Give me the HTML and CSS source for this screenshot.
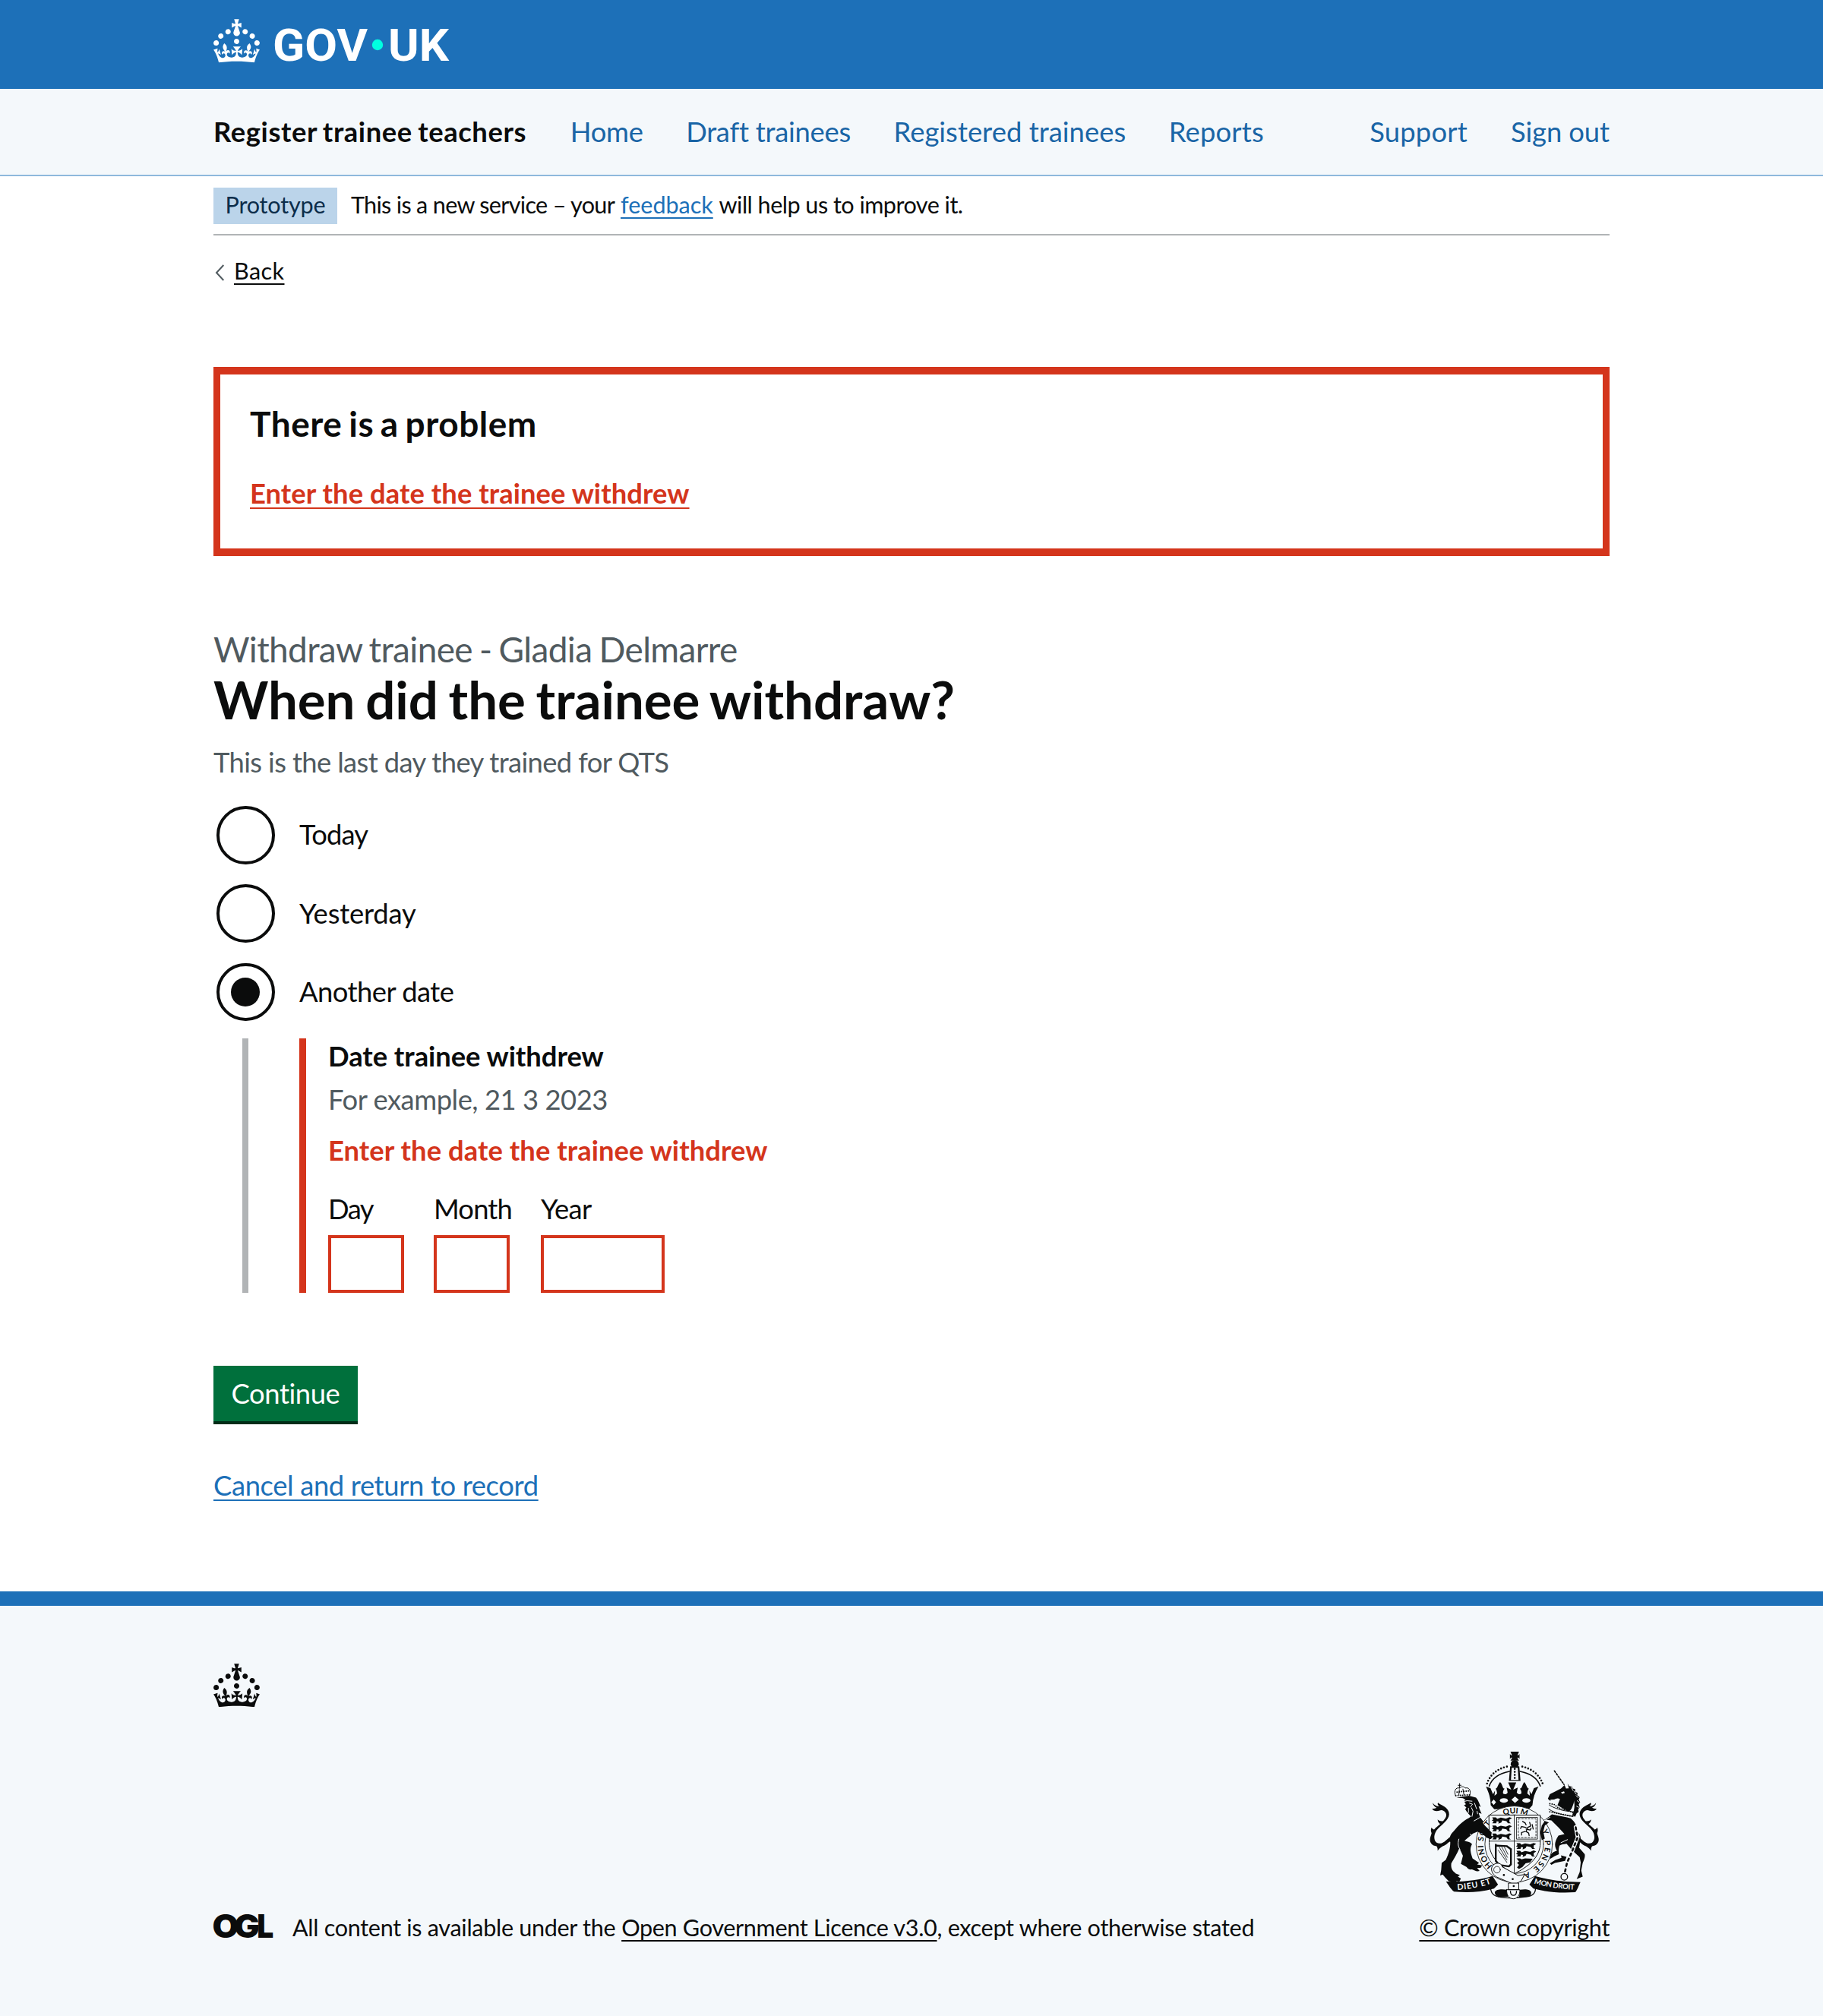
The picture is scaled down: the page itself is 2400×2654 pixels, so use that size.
FILE: index.html
```html
<!DOCTYPE html>
<html lang="en">
<head>
<meta charset="utf-8">
<title>When did the trainee withdraw? - Register trainee teachers - GOV.UK</title>
<link rel="stylesheet" href="styles.css">
</head>
<body>
<svg class="defs" aria-hidden="true">
  <symbol id="crown" viewBox="0 0 32 30">
    <path d="M22.6 10.4c-1 .4-2-.1-2.4-1-.4-.9.1-2 1-2.4.9-.4 2 .1 2.4 1s-.1 2-1 2.4m-5.9 6.7c-.9.4-2-.1-2.4-1-.4-.9.1-2 1-2.4.9-.4 2 .1 2.4 1s-.1 2-1 2.4m10.8-3.7c-1 .4-2-.1-2.4-1-.4-.9.1-2 1-2.4.9-.4 2 .1 2.4 1s0 2-1 2.4m3.3 4.8c-1 .4-2-.1-2.4-1-.4-.9.1-2 1-2.4.9-.4 2 .1 2.4 1s-.1 2-1 2.4M17 4.7l2.3 1.2V2.5l-2.3.7-.2-.2.9-3h-3.4l.9 3-.2.2c-.1.1-2.3-.7-2.3-.7v3.4L15 4.7c.1.1.1.2.2.2l-1.3 4c-.1.2-.1.4-.1.6 0 1.1.8 2 1.9 2.2h.7c1-.2 1.9-1.1 1.9-2.1 0-.2 0-.4-.1-.6l-1.3-4c-.1-.2 0-.2.1-.3m-7.6 5.7c.9.4 2-.1 2.4-1 .4-.9-.1-2-1-2.4-.9-.4-2 .1-2.4 1s0 2 1 2.4m-5 3c.9.4 2-.1 2.4-1 .4-.9-.1-2-1-2.4-.9-.4-2 .1-2.4 1s.1 2 1 2.4m-3.2 4.8c.9.4 2-.1 2.4-1 .4-.9-.1-2-1-2.4-.9-.4-2 .1-2.4 1s0 2 1 2.4m14.8 11c4.4 0 8.6.3 12.3.8 1.1-4.5 2.4-7 3.7-8.8l-2.5-.9c.2 1.3.3 1.9 0 2.7-.4-.4-.8-1.1-1.1-2.3l-1.2 4c.7-.5 1.3-.8 2-.9-1.1 2.5-2.6 3.1-3.5 3-1.1-.2-1.7-1.2-1.5-2.1.3-1.2 1.5-1.5 2.1-.1 1.1-2.3-.8-3-2-2.3 1.9-1.9 2.1-3.5.6-5.6-2.1 1.6-2.1 3.2-1.2 5.5-1.2-1.4-3.2-.6-2.5 1.6.9-1.4 2.1-.5 1.9.8-.2 1.1-1.7 2.1-3.5 1.9-2.7-.2-2.9-2.1-2.9-3.6.7-.1 1.9.5 2.9 1.9l.4-4.3c-1.1 1.1-2.1 1.4-3.2 1.4.4-1.2 2.1-3 2.1-3h-5.4s1.7 1.9 2.1 3c-1.1 0-2.1-.2-3.2-1.4l.4 4.3c1-1.4 2.2-2 2.9-1.9-.1 1.5-.2 3.4-2.9 3.6-1.9.2-3.4-.8-3.5-1.9-.2-1.3 1-2.2 1.9-.8.7-2.3-1.2-3-2.5-1.6.9-2.2.9-3.9-1.2-5.5-1.5 2-1.3 3.7.6 5.6-1.2-.7-3.1 0-2 2.3.6-1.4 1.8-1.1 2.1.1.2.9-.3 1.9-1.5 2.1-.9.2-2.4-.5-3.5-3 .6 0 1.2.3 2 .9l-1.2-4c-.3 1.1-.7 1.9-1.1 2.3-.3-.8-.2-1.4 0-2.7l-2.9.9C1.3 23 2.6 25.5 3.7 30c3.7-.5 7.9-.8 12.3-.8"/>
  </symbol>
</svg>

<header class="header">
  <div class="container header-inner">
    <svg class="header-crown"><use href="#crown"/></svg>
    <svg class="wordmark" viewBox="0 0 232 60" role="img" aria-label="GOV.UK">
      <text x="-2" y="51" textLength="125" lengthAdjust="spacingAndGlyphs">GOV</text>
      <circle cx="136" cy="30" r="7.2"/>
      <text x="150" y="51" textLength="80" lengthAdjust="spacingAndGlyphs">UK</text>
    </svg>
  </div>
</header>

<nav class="nav">
  <div class="container nav-inner">
    <a class="service" href="#">Register trainee teachers</a>
    <a class="home" href="#">Home</a>
    <a class="drafts" href="#">Draft trainees</a>
    <a class="registered" href="#">Registered trainees</a>
    <a class="reports" href="#">Reports</a>
    <div class="nav-end">
      <a class="support" href="#">Support</a>
      <a class="sign-out" href="#">Sign out</a>
    </div>
  </div>
</nav>

<div class="container">
  <div class="phase">
    <strong class="tag">Prototype</strong>
    <p class="phase-text"><span class="phase-lead">This is a new service – your</span> <a class="link feedback" href="#">feedback</a> <span class="phase-tail">will help us to improve it.</span></p>
  </div>
  <a class="back" href="#"><svg viewBox="0 0 14 22"><path d="M12.300 1 3 11l9.300 10" /></svg><span>Back</span></a>

  <main>
    <section class="error-summary">
      <h2>There is a problem</h2>
      <a href="#day">Enter the date the trainee withdrew</a>
    </section>

    <form>
      <h1><span class="caption">Withdraw trainee - Gladia Delmarre</span><span class="title">When did the trainee withdraw?</span></h1>
      <p class="hint page-hint">This is the last day they trained for QTS</p>

      <div class="radios">
        <label class="radio"><span class="circle"></span><span class="today">Today</span></label>
        <label class="radio"><span class="circle"></span><span class="yesterday">Yesterday</span></label>
        <label class="radio"><span class="circle checked"></span><span class="another">Another date</span></label>
      </div>

      <div class="conditional">
        <div class="date-group">
          <p class="legend">Date trainee withdrew</p>
          <p class="hint date-hint">For example, 21 3 2023</p>
          <p class="error">Enter the date the trainee withdrew</p>
          <div class="date-inputs">
            <div class="field day"><label for="day">Day</label><input id="day"></div>
            <div class="field month"><label for="month">Month</label><input id="month"></div>
            <div class="field year"><label for="year">Year</label><input id="year"></div>
          </div>
        </div>
      </div>

      <button class="button" type="button">Continue</button>
      <a class="link cancel" href="#">Cancel and return to record</a>
    </form>
  </main>
</div>

<footer class="footer">
  <div class="container">
    <svg class="footer-crown"><use href="#crown"/></svg>
    <div class="meta">
      <div class="licence">
        <svg class="ogl" viewBox="0 0 78 33" role="img" aria-label="OGL">
          <text x="-1.500" y="31.800" textLength="35" lengthAdjust="spacingAndGlyphs">O</text>
          <text x="27" y="31.800" textLength="34" lengthAdjust="spacingAndGlyphs">G</text>
          <text x="57.200" y="31.800" textLength="22" lengthAdjust="spacingAndGlyphs">L</text>
        </svg>
        <p><span class="all">All content is available under the</span> <a class="ogl-link" href="#">Open Government Licence v3.0</a><span class="except">, except where otherwise stated</span></p>
      </div>
      <div class="copyright">
        <svg class="arms" viewBox="130 40 670 592" aria-hidden="true">
          <defs>
            <path id="garter-left" d="M379 498A122 122 0 0 1 392 313"/>
            <path id="garter-top" d="M400 309A122 122 0 0 1 540 316"/>
            <path id="garter-right" d="M560 336A122 122 0 0 1 470 534"/>
            <path id="motto-left" d="M240 593Q318 588 378 566"/>
            <path id="motto-right" d="M543 567Q612 588 706 592"/>
            <g id="passant">
              <path d="M4 4h14l6 6 14-5 20 4 14-6 10 4-10 6 0 10 6 4h-12l-6-8-16-3-4 8-12 5 2-8-8-2-2 8H4l6-7-8-4 6-4z"/>
            </g>
            <g id="tail">
              <path d="M142 248c8 10 14 14 26 14-6-6-8-10-4-14 10 10 34 14 42 36 8 26-20 44-42 66-18 18-20 44-6 56 10 6 24 4 38-10l14-12 6 14-12 8c-8 8-14 12-22 14-10 6-14 10-20 18 0-8 0-12-4-18-18-2-28-14-26-30 1-10 5-14 6-22-3-8-4-14 0-22 3 6 6 8 10 8 8-10 18-16 24-22-6-4-10-10-10-18 6 6 14 8 22 6 12-12 16-24 8-34-8-10-16-10-24-6-14 4-24-2-28-8 10 0 14-2 18-4-8-4-14-10-16-20z"/>
            </g>
          </defs>

          <!-- imperial crown -->
          <path d="M450 46c4 9 6 12 6 15-3 0-6-2-8-6v20c2-4 5-6 8-6 0 4-2 7-6 12h34c-4-5-6-8-6-12 3 0 6 2 8 6V55c-2 4-5 6-8 6 0-3 2-6 6-15z"/>
          <circle cx="467" cy="95" r="16"/>
          <path d="M449 104h36l5 58h-46z"/>
          <path class="paper" d="M455 110h24l3 48h-30z"/>
          <path class="dots" d="M467 114v44"/>
          <path class="line wide" d="M446 124c-42 8-70 30-80 58M488 124c42 8 70 30 80 58"/>
          <path class="dots" d="M436 105c-42 10-70 36-80 72M497 105c42 10 70 36 82 72"/>
          <path d="M353 184l18 6 10 24 8-14-2 20 10-8c0-8-2-14-6-20 8 0 8-14 18-26 12 12 8 26 18 26-4 6-8 12-6 20 8 4 14 2 18-4l-4-20 18 8-12-28h32l-12 28 18-8-4 20c6 6 10 8 18 4 2-8-2-14-6-20 10 0 8-14 18-26 10 12 10 26 18 26-4 6-6 12-6 20l10 8-2-20 8 14 10-24 18-6c-14 22-22 46-24 74l-14 16H386l-14-16c0-28-8-52-19-74z"/>
          <path class="paper" d="M454 236l14-13 15 13-15 13z"/>
          <ellipse class="paper" cx="424" cy="239" rx="16" ry="9"/><ellipse class="paper" cx="513" cy="239" rx="16" ry="9"/>
          <path class="paper" d="M374 246l10-11 9 11-9 11zM543 246l10-11 9 11-9 11z"/>

          <!-- lion supporter -->
          <use href="#tail"/>
          <path d="M236 228l50-8 28 8c10 12 14 26 18 36-4 0-6 0-8-2 4 12 8 22 12 30l-12-4 6 18 34 42 14 10-6 24-24-6-28-14-18 8-34 28c12 4 26 6 30 14-10 18-6 32 2 56l26 18-8 6 20 4-6 10h-14l10 12c-12 4-20-2-30-6-10 2-18-4-22-10l-22-12 8-32-14-30c-8 20-20 40-32 60-2 18 2 28 18 40l16 6-8 6 12 8-6 12-12-2 4 14c-18-4-26-12-34-14l-14-14-10-12-10 4 4-22 2-28 16-12c12-26 18-46 18-70-6-16 0-30 12-42 22-26 38-42 62-54l8-6-14-14-10-16 6-4-10-10 8-4-8-12 6-6-10-6z"/>
          <path class="paper-line" d="M246 238l18 6 14-4 20 2M246 256l10-6M266 252l-4 14 10 4M288 250l12 4-8 10M250 268l14 6M284 270v14l-6 18M296 268l6 14-4 20M308 250l8 22M318 282l2 10"/>
          <path class="paper-line" d="M330 306l-24 14M246 392c-6 20-2 30 4 40M290 372l20 18"/>
          <path class="line fine" d="M233 220c-8-18 0-34 16-30 8-8 18-6 22 0 16-4 24 10 18 28M249 172v18M243 179h12M262 194l4 22M248 196l-2 20"/>
          <path class="dots small" d="M234 220l56-3M239 206l48-5"/>

          <!-- unicorn supporter -->
          <use href="#tail" transform="matrix(-1 0 0 1 931 0)"/>
          <path class="line wide dash" d="M624 122l38 54"/>
          <path d="M650 192l14-14 6 14 20-2c12 18 18 44 6 72-4 12-10 18-16 22l-44-26 10-24c-8-6-18-2-28 4l-12 2-8-8 8-18 28-14z"/>
          <path d="M676 172l6 10 12 2 2 8 10 2 0 10 10 6-2 8 10 8-4 10 6 10-6 8 4 12-6 8 2 10-8 6-6 14-12-6c12-24 16-62-10-96z"/>
          <path class="paper" d="M650 207l12-4 3 6-10 4zM608 236l16-1 2 4-16 3z"/>
          <path class="paper-line" d="M690 186l8 14M702 202l8 12M710 220l8 8M714 240l8 6M712 262l8 4"/>
          <path class="line fine" d="M604 258c32 18 64 24 98 26M602 274c30 18 64 24 96 28"/>
          <path class="dots small" d="M606 252l16 2 16 14 20 6 22 4 22 12M606 284l90 18"/>
          <path d="M574 324l30-22 10-8 60 12 14 4c20 14 26 38 28 54 10 10 14 20 10 36l-4 26 22 26c2 10-2 20-8 34l-6 30 6 24-24 10 12-28 4-38-4-20-30-28-22-26c-10 2-22 2-28 8-4 14-4 22-2 34l-18 8-16 10-6-6c8-14 16-22 32-26-8-14-14-30 6-60l24-6-24-26-28-28-28-4-16 20 6 36-12 12-12-28c-2-20 2-34 10-42z"/>
          <path class="paper-line" d="M606 306l-22 14M650 406l26-12M600 320l30 30"/>
          <path d="M606 488l22-14 24-8-2-10 22 6-6 16-40 8-14 8z"/>
          <path class="chain-gap" d="M708 345l8 40-24 60-18 40-10 44"/>
          <path class="chain" d="M708 345l8 40-24 60-18 40-10 44"/>
          <circle class="line" cx="663" cy="541" r="13"/>

          <!-- garter and shield -->
          <circle class="paper" cx="465" cy="412" r="151"/>
          <circle class="edge" cx="465" cy="412" r="151"/>
          <circle class="edge" cx="465" cy="412" r="116"/>
          <text class="garter"><textPath href="#garter-left" textLength="186">HONI SOIT</textPath></text>
          <text class="garter"><textPath href="#garter-top" startOffset="26">QUI  M</textPath></text>
          <text class="garter"><textPath href="#garter-right" startOffset="26" textLength="210">Y PENSE A</textPath></text>
          <path class="shield" d="M366 297h202v110c0 56-46 94-103 122-56-28-99-66-99-122z"/>
          <path class="edge" d="M465 297v230M366 400h202"/>
          <use href="#passant" x="374" y="302"/><use href="#passant" x="374" y="334"/><use href="#passant" x="374" y="366"/>
          <use href="#passant" x="470" y="404"/><use href="#passant" x="470" y="434"/><path d="M474 468h14l6 4 14-4 30 2-10 14-18 4-12 14-14 8-8-6 8-10-8-8 8-6z"/>
          <path class="edge" d="M475 306h82v86h-82z"/><path class="edge dash" d="M481 312h70v74h-70z"/>
          <path class="line" d="M498 322l10 6 4 8M526 326l4 14-12 6-6 16 10 6 2 10M512 346l-18-4-4 8M508 362l-14 4 0 10M512 352l16 4 4-8M536 334l4 18"/>
          <path class="line thick" d="M392 414v64l14 16 38 6 8-8v-60l-16-12-40-2"/>
          <path class="harp" d="M400 424c14 4 26-6 40 6v58c-24-6-38-26-40-64z"/>
          <path class="edge" d="M406 424l30 50M416 424l22 40M426 424l14 28M402 436l34 48"/>
          <path d="M316 344l20-22 14 18 26 26-2 12 6 6-8 8-16-6-18-16-16-6zM568 366l6-28 12-18 16 6-16 12-6 24 6 28-12 6z"/>
          <path class="strap" d="M382 494c18-14 34-4 36 8l62 34 26-4-14 26-26 14-70-30c-20-12-28-34-14-48z"/>
          <circle class="edge" cx="397" cy="513" r="13"/>
          <circle cx="424" cy="534" r="4"/><circle cx="459" cy="550" r="4"/>

          <!-- motto ribbon -->
          <path d="M195 560c72 2 130-6 184-22l22 34-16 16c-58 16-108 16-158 12-12-8-20-24-32-40zM727 562c-70 0-122-8-180-24l-22 34 16 16c56 14 108 18 166 14 8-10 12-24 20-40z"/>
          <path class="line" d="M371 578c0 26 10 40 40 44 36 6 70 2 100-2 28-2 40-16 38-38"/>
          <path d="M388 602c6-14 30-12 50-10l2 28-36 2c-10-4-16-10-16-20zM532 602c-6-14-26-12-44-10l-4 30 36-2c10-4 12-8 12-18z"/>
          <path class="strap" d="M443 566h40v26h-40zM435 592h52c2 24-12 36-25 36-16 0-28-12-27-36z"/>
          <path class="line" d="M450 598c0 22 24 22 24 0"/><circle cx="463" cy="578" r="4"/>
          <text class="motto"><textPath href="#motto-left" textLength="136">DIEU ET</textPath></text>
          <text class="motto small-motto"><textPath href="#motto-right" textLength="162">MON DROIT</textPath></text>
        </svg>
        <a href="#">© Crown copyright</a>
      </div>
    </div>
  </div>
</footer>
</body>
</html>
```
FILE: styles.css
```css
* { box-sizing: border-box; }

body {
  margin: 0;
  background: #fff;
  color: #0b0c0c;
  font-family: Lato, "Open Sans", sans-serif;
  font-size: 36.4px;
  line-height: 48px;
}

h1, h2, p { margin: 0; }
svg { display: block; }
a { color: inherit; }
.defs { display: none; }

.container {
  width: 1838px;
  margin: 0 auto;
}

.link, .back span, .error-summary a, .ogl-link, .copyright a {
  text-decoration: underline;
  text-decoration-thickness: 2px;
  text-underline-offset: 5px;
  text-decoration-skip-ink: none;
}
.link { color: #1d70b8; }

/* Header */
.header { height: 117px; background: #1d70b8; color: #fff; }
.header-inner { display: flex; gap: 19px; padding-top: 25px; }
.header-crown, .footer-crown { width: 61px; height: 57.500px; fill: currentColor; }
.wordmark { width: 232px; height: 60px; margin-top: 4px; overflow: visible; }
.wordmark text { font: 700 59px Roboto, sans-serif; fill: #fff; }
.wordmark circle { fill: #00ffe0; }

/* Service navigation */
.nav {
  height: 115px;
  background: #f4f8fb;
  border-bottom: 2px solid #8eb8dc;
}
.nav-inner {
  display: flex;
  align-items: center;
  gap: 56.500px;
  height: 111px;
  color: #1a65a6;
}
.nav a { text-decoration: none; white-space: nowrap; }
.nav .service { margin-right: 1px; color: #0b0c0c; font-weight: 700; letter-spacing: .58px; word-spacing: -2px; }
.home { letter-spacing: -.26px; }
.drafts { letter-spacing: -.26px; }
.registered { letter-spacing: .03px; }
.reports { letter-spacing: .18px; }
.nav-end { display: flex; gap: 57px; margin-left: auto; }
.support { letter-spacing: .2px; }
.sign-out { letter-spacing: -.1px; }

/* Phase banner */
.phase {
  display: flex;
  gap: 18px;
  height: 78px;
  padding-top: 15px;
  border-bottom: 2px solid #b1b4b6;
  font-size: 30.600px;
  line-height: 45px;
}
.tag {
  width: 163px;
  height: 48px;
  background: #bbd4ea;
  color: #0c2d4a;
  font-weight: 400;
  letter-spacing: -.19px;
  text-align: center;
}
.phase-text { white-space: nowrap; }
.phase-lead { letter-spacing: -.7px; }
.feedback { letter-spacing: -.05px; }
.phase-tail { letter-spacing: -.53px; }

.back {
  display: flex;
  align-items: center;
  width: max-content;
  margin-top: 27px;
  font-size: 30.600px;
  line-height: 40px;
  text-decoration: none;
}
.back svg { width: 14px; height: 22px; margin: 3px 12px 0 1px; }
.back path { fill: none; stroke: #505a5f; stroke-width: 2; }
.back span { letter-spacing: .4px; }

/* Error summary */
.error-summary {
  height: 249px;
  margin-top: 106px;
  padding: 37px 39px 0;
  border: 10px solid #d4351c;
  border-width: 10px 9px;
}
.error-summary h2 {
  font-size: 46px;
  line-height: 56px;
  letter-spacing: .54px;
  word-spacing: -3px;
}
.error-summary a {
  display: block;
  width: max-content;
  margin-top: 39px;
  color: #d4351c;
  font-weight: 700;
  letter-spacing: .04px;
  text-underline-offset: 5px;
}

/* Question */
.caption {
  display: block;
  margin-top: 95px;
  color: #505a5f;
  font-size: 46px;
  font-weight: 400;
  line-height: 56px;
  letter-spacing: -.66px;
  word-spacing: -2px;
}
.title {
  display: block;
  margin-top: 2px;
  font-size: 69px;
  line-height: 72px;
  letter-spacing: -.05px;
  word-spacing: -3px;
}
.hint { color: #505a5f; }
.page-hint { margin-top: 22px; letter-spacing: -.65px; }

.radios {
  display: flex;
  flex-direction: column;
  gap: 26.800px;
  margin-top: 34px;
  padding-left: 4px;
}
.radio {
  display: flex;
  align-items: center;
  gap: 32.500px;
  height: 76.600px;
  line-height: 44px;
}
.radio span + span { padding-bottom: 2px; }
.circle {
  display: grid;
  place-items: center;
  width: 76.600px;
  height: 76.600px;
  border: 4px solid #0b0c0c;
  border-radius: 50%;
}
.checked::before {
  content: "";
  width: 38px;
  height: 38px;
  border-radius: 50%;
  background: #0b0c0c;
}
.today { letter-spacing: -.9px; }
.yesterday { letter-spacing: -.2px; }
.another { letter-spacing: -.55px; }

.conditional {
  height: 335px;
  margin: 22.600px 0 0 38px;
  padding-left: 67px;
  border-left: 8px solid #b1b4b6;
}
.date-group {
  height: 335px;
  padding: 1px 0 0 29px;
  border-left: 9px solid #d4351c;
  line-height: 44px;
}
.legend { font-weight: 700; letter-spacing: -.05px; }
.date-hint { margin-top: 13px; letter-spacing: -.49px; }
.error { margin-top: 23px; color: #d4351c; font-weight: 700; letter-spacing: .04px; }
.date-inputs { display: flex; gap: 39px; margin-top: 33px; }
.field { width: 100px; }
.field label { display: block; margin-bottom: 13px; }
.field input {
  display: block;
  width: 100%;
  height: 76px;
  border: 4px solid #d4351c;
  border-radius: 0;
  background: #fff;
}
.month { width: 102px; }
.month input { width: 100px; }
.year { width: 163px; }
.day label { letter-spacing: -1.500px; }
.month label { letter-spacing: -.85px; }
.year label { letter-spacing: -.7px; }

.button {
  display: block;
  width: 190px;
  height: 77px;
  margin-top: 96px;
  padding: 0;
  border: 0;
  border-bottom: 4px solid #002d18;
  background: #00703c;
  color: #fff;
  font: inherit;
  letter-spacing: -.43px;
}
.cancel {
  display: block;
  width: max-content;
  margin-top: 56px;
  letter-spacing: -.38px;
}

/* Footer */
.footer {
  margin-top: 116px;
  height: 559px;
  padding-top: 76px;
  border-top: 19px solid #1d70b8;
  background: #f4f8fb;
}
.meta {
  display: flex;
  justify-content: space-between;
  align-items: flex-end;
  margin-top: 56.500px;
  font-size: 30.600px;
  line-height: 40px;
}
.licence { display: flex; align-items: flex-start; gap: 26px; white-space: nowrap; }
.licence p { padding-top: 1px; margin-bottom: -1px; }
.all { letter-spacing: -.32px; }
.ogl-link { letter-spacing: -.34px; }
.except { letter-spacing: -.3px; }
.ogl { width: 78px; height: 33px; margin-top: 2px; overflow: visible; }
.ogl text { font: 900 42px Inter, sans-serif; fill: #0b0c0c; }
.copyright { display: flex; flex-direction: column; align-items: center; gap: 17px; margin-bottom: -1px; }
.copyright a { letter-spacing: -.35px; }

/* Royal coat of arms */
.arms { width: 223px; height: 197px; fill: #0b0c0c; stroke-linecap: round; }
.arms .paper, .arms .harp { fill: #f4f8fb; }
.arms .line, .arms .edge { fill: none; stroke: #0b0c0c; stroke-width: 4; }
.arms .edge { stroke-width: 2.500; }
.arms .fine { stroke-width: 3; }
.arms .wide { stroke-width: 5; }
.arms .thick { stroke-width: 7; }
.arms .dots { fill: none; stroke: #0b0c0c; stroke-width: 8; stroke-dasharray: 0 12; }
.arms .dots.small { stroke-width: 6; stroke-dasharray: 0 9; }
.arms .dash { stroke-dasharray: 7 6; }
.arms .paper-line { fill: none; stroke: #f4f8fb; stroke-width: 3; }
.arms .shield, .arms .strap { fill: #f4f8fb; stroke: #0b0c0c; stroke-width: 3; }
.arms .chain-gap { fill: none; stroke: #f4f8fb; stroke-width: 15; }
.arms .chain { fill: none; stroke: #0b0c0c; stroke-width: 8; stroke-dasharray: 9 13; }
.garter { font: 700 31px Lato, sans-serif; }
.motto { font: 700 32px Lato, sans-serif; fill: #f4f8fb; }
.small-motto { font-size: 29px; }
```
